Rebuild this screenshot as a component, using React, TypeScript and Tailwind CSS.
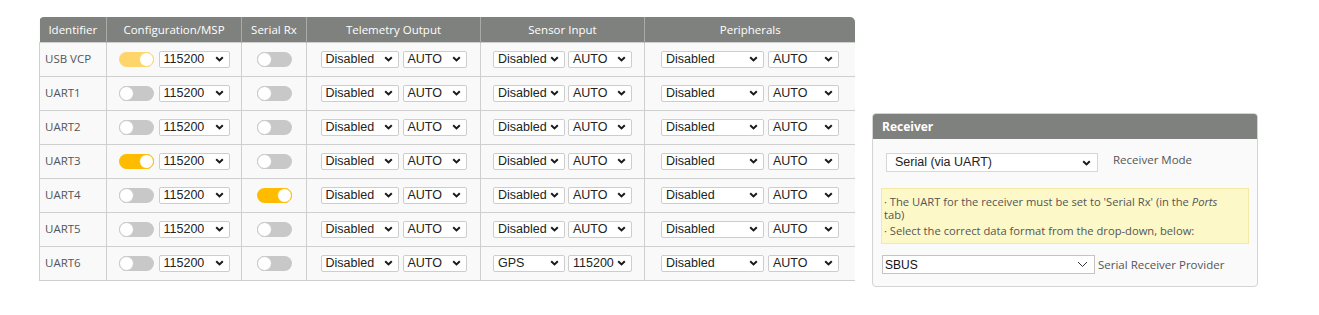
type Sw = "off" | "on" | "dim";

interface PortRow {
  id: string;
  msp: Sw;
  rx: Sw;
  sensor: [string, string];
}

const rows: PortRow[] = [
  { id: "USB VCP", msp: "dim", rx: "off", sensor: ["Disabled", "AUTO"] },
  { id: "UART1", msp: "off", rx: "off", sensor: ["Disabled", "AUTO"] },
  { id: "UART2", msp: "off", rx: "off", sensor: ["Disabled", "AUTO"] },
  { id: "UART3", msp: "on", rx: "off", sensor: ["Disabled", "AUTO"] },
  { id: "UART4", msp: "off", rx: "on", sensor: ["Disabled", "AUTO"] },
  { id: "UART5", msp: "off", rx: "off", sensor: ["Disabled", "AUTO"] },
  { id: "UART6", msp: "off", rx: "off", sensor: ["GPS", "115200"] },
];

function Toggle({ state }: { state: Sw }) {
  const track =
    state === "on" ? "bg-[#ffbb00]" : state === "dim" ? "bg-[#fdd56a]" : "bg-[#c8c8c8]";
  const knob =
    state === "on" ? "border-[#ffbb00]" : state === "dim" ? "border-[#fdd56a]" : "border-[#c8c8c8]";
  return (
    <span
      className={`flex h-[15px] w-[35px] shrink-0 items-center rounded-full ${track} ${
        state === "off" ? "justify-start" : "justify-end"
      }`}
    >
      <span className={`h-[15px] w-[15px] rounded-full border bg-white ${knob}`} />
    </span>
  );
}

function Chevron({ thin }: { thin?: boolean }) {
  if (thin)
    return (
      <svg width="11" height="7" viewBox="0 0 11 7" className="shrink-0">
        <path d="M1 1 L5.5 5.5 L10 1" stroke="#333" strokeWidth="1" fill="none" />
      </svg>
    );
  return (
    <svg width="9" height="6" viewBox="0 0 9 6" className="shrink-0">
      <path d="M1.2 1.2 L4.5 4.4 L7.8 1.2" stroke="#1a1a1a" strokeWidth="2" fill="none" />
    </svg>
  );
}

function Sel({ w, text }: { w: string; text: string }) {
  return (
    <div
      className={`flex h-[17px] ${w} shrink-0 items-center justify-between rounded-[2px] border border-[#cdcdcd] bg-white pl-[4px] pr-[5px] font-['Liberation_Sans',Arial,sans-serif] text-[12.5px] leading-none text-[#222]`}
    >
      <span>{text}</span>
      <Chevron />
    </div>
  );
}

function App() {
  const th =
    "h-[25px] border-x border-[#a9aba8] p-0 text-center text-[11.5px] font-normal text-white first:border-l-0 last:border-r-0";
  const td = "h-[34px] border border-[#cfcfcf] p-0";

  return (
    <div className="flex min-h-[315px] items-start bg-white pl-[39px] pt-[17px] font-['Open_Sans',sans-serif] text-[#555]">
      {/* Ports table */}
      <div className="w-[816px] overflow-hidden rounded-t-[5px]">
        <table className="w-full table-fixed border-collapse bg-[#f9f9f9]">
          <thead>
            <tr className="bg-[#7f817e]">
              <th className={`${th} w-[67px]`}>Identifier</th>
              <th className={`${th} w-[135px]`}>Configuration/MSP</th>
              <th className={`${th} w-[65px]`}>Serial Rx</th>
              <th className={`${th} w-[174px]`}>Telemetry Output</th>
              <th className={`${th} w-[164px]`}>Sensor Input</th>
              <th className={`${th} w-[211px]`}>Peripherals</th>
            </tr>
          </thead>
          <tbody>
            {rows.map((r) => (
              <tr key={r.id}>
                <td className={`${td} pl-[5px] text-[11.5px]`}>{r.id}</td>
                <td className={td}>
                  <div className="flex items-center justify-center gap-[5px]">
                    <Toggle state={r.msp} />
                    <Sel w="w-[71px]" text="115200" />
                  </div>
                </td>
                <td className={td}>
                  <div className="flex justify-center">
                    <Toggle state={r.rx} />
                  </div>
                </td>
                <td className={td}>
                  <div className="flex items-center justify-center gap-[4px]">
                    <Sel w="w-[78px]" text="Disabled" />
                    <Sel w="w-[64px]" text="AUTO" />
                  </div>
                </td>
                <td className={td}>
                  <div className="flex items-center justify-center gap-[3px]">
                    <Sel w="w-[72px]" text={r.sensor[0]} />
                    <Sel w="w-[64px]" text={r.sensor[1]} />
                  </div>
                </td>
                <td className={td}>
                  <div className="flex items-center justify-center gap-[4px]">
                    <Sel w="w-[103px]" text="Disabled" />
                    <Sel w="w-[71px]" text="AUTO" />
                  </div>
                </td>
              </tr>
            ))}
          </tbody>
        </table>
      </div>

      {/* Receiver panel */}
      <div className="ml-[17px] mt-[96px] w-[386px] overflow-hidden rounded-[4px] border border-[#d4d4d4] bg-[#fafafa]">
        <div className="flex h-[25px] items-center bg-[#7f817e] px-[9px] text-[12px] font-bold text-white">
          Receiver
        </div>
        <div className="px-[8px] pb-[12px] pt-[14px]">
          <div className="flex items-start">
            <div className="ml-[5px] flex h-[19px] w-[212px] items-center justify-between border border-[#d6d6d6] bg-white pl-[8px] pr-[6px] font-['Liberation_Sans',Arial,sans-serif] text-[12.5px] text-[#222]">
              <span>Serial (via UART)</span>
              <Chevron />
            </div>
            <span className="ml-[15px] text-[11.5px] leading-[14px]">Receiver Mode</span>
          </div>
          <div className="mt-[16px] h-[56px] border border-[#f4e9a4] bg-[#fdf8c8] px-[2px] pt-[6px] text-[11.2px] leading-[13px] text-[#555]">
            <p>
              · The UART for the receiver must be set to 'Serial Rx' (in the <em>Ports</em>
              <br />
              tab)
            </p>
            <p className="mt-[3px]">· Select the correct data format from the drop-down, below:</p>
          </div>
          <div className="mt-[11px] flex items-center">
            <div className="ml-[1px] flex h-[19px] w-[213px] items-center justify-between border border-[#c4c4c4] bg-white pl-[2px] pr-[6px] font-['Liberation_Sans',Arial,sans-serif] text-[12px] text-[#111]">
              <span>SBUS</span>
              <Chevron thin />
            </div>
            <span className="ml-[3px] text-[11.5px]">Serial Receiver Provider</span>
          </div>
        </div>
      </div>
    </div>
  );
}

export default App;
